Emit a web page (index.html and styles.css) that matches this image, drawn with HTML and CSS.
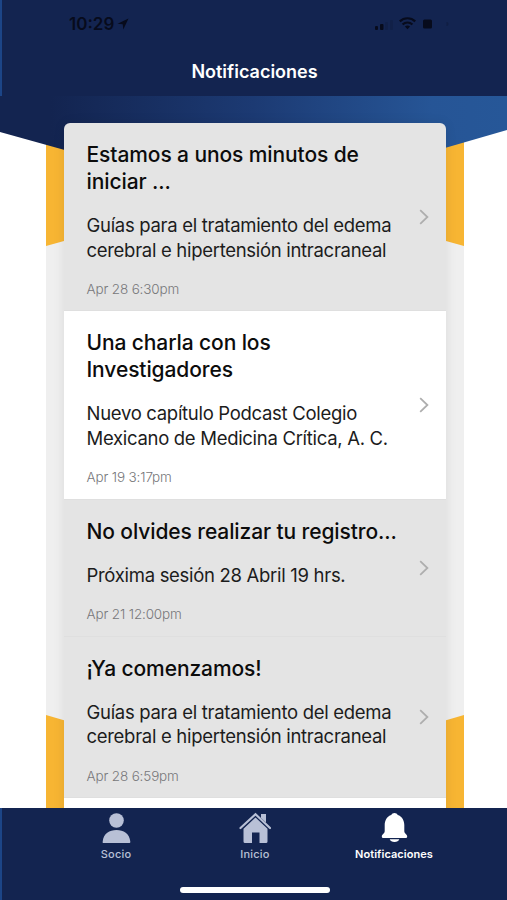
FILE: index.html
```html
<!DOCTYPE html>
<html lang="es">
<head>
<meta charset="UTF-8">
<meta name="viewport" content="width=device-width, initial-scale=1">
<title>Notificaciones</title>
<link rel="stylesheet" href="styles.css">
</head>
<body>
<div class="app">
  <header class="header">
    <div class="status">
      <span class="time">10:29</span>
      <svg class="location" width="12" height="12" viewBox="0 0 12 12"><path d="M11.5 .5L.5 5.7l5.2.6.6 5.2z"/></svg>
      <svg class="signals" width="78" height="16" viewBox="0 0 78 16">
        <rect x="1" y="10" width="3" height="4" rx="1"/>
        <rect x="6" y="8" width="3.5" height="6" rx="1"/>
        <rect x="11" y="6" width="3" height="8" rx="1" opacity=".15"/>
        <rect x="16" y="4" width="3" height="10" rx="1" opacity=".15"/>
        <g fill="none" stroke="#070b1c" stroke-width="2.2">
          <path d="M25.800 5.400a11 11 0 0 1 15.400 0"/>
          <path d="M28.600 8.500a7 7 0 0 1 9.800 0"/>
        </g>
        <path d="M33.500 13.300l-2.600-2.700a3.800 3.800 0 0 1 5.200 0z"/>
        <rect x="49" y="3.500" width="9" height="9" rx="1.500"/>
        <path d="M72.500 6v4a2 2 0 0 0 0-4z" opacity=".25"/>
      </svg>
    </div>
    <h1>Notificaciones</h1>
  </header>

  <main class="content">
    <svg class="backdrop" width="507" height="712" viewBox="0 0 507 712">
      <defs>
        <linearGradient id="blue" x1="0" x2="1" y1="0" y2="0">
          <stop offset=".1" stop-color="#132450"/>
          <stop offset=".5" stop-color="#1c3a73"/>
          <stop offset=".85" stop-color="#265596"/>
          <stop offset="1" stop-color="#265798"/>
        </linearGradient>
      </defs>
      <rect x="46" width="418" height="712" fill="#f7b533"/>
      <path d="M46 150L255 92L464 150V619L255 680L46 619z" fill="#efefef"/>
      <path d="M0 0H507V34L255 107L0 36z" fill="url(#blue)"/>
    </svg>
    <div class="list">
      <article class="item">
        <div class="text">
          <h2>Estamos a unos minutos de<br>iniciar ...</h2>
          <p>Guías para el tratamiento del edema<br>cerebral e hipertensión intracraneal</p>
          <time>Apr 28 6:30pm</time>
        </div>
        <svg class="chevron" width="10" height="16" viewBox="0 0 10 16"><path d="M1.2 1.2L8.4 8l-7.2 6.8"/></svg>
      </article>
      <article class="item unread">
        <div class="text">
          <h2>Una charla con los<br>Investigadores</h2>
          <p>Nuevo capítulo Podcast Colegio<br>Mexicano de Medicina Crítica, A. C.</p>
          <time>Apr 19 3:17pm</time>
        </div>
        <svg class="chevron" width="10" height="16" viewBox="0 0 10 16"><path d="M1.2 1.2L8.4 8l-7.2 6.8"/></svg>
      </article>
      <article class="item">
        <div class="text">
          <h2>No olvides realizar tu registro...</h2>
          <p>Próxima sesión 28 Abril 19 hrs.</p>
          <time>Apr 21 12:00pm</time>
        </div>
        <svg class="chevron" width="10" height="16" viewBox="0 0 10 16"><path d="M1.2 1.2L8.4 8l-7.2 6.8"/></svg>
      </article>
      <article class="item">
        <div class="text">
          <h2>¡Ya comenzamos!</h2>
          <p>Guías para el tratamiento del edema<br>cerebral e hipertensión intracraneal</p>
          <time>Apr 28 6:59pm</time>
        </div>
        <svg class="chevron" width="10" height="16" viewBox="0 0 10 16"><path d="M1.2 1.2L8.4 8l-7.2 6.8"/></svg>
      </article>
      <div class="next"></div>
    </div>
  </main>

  <footer class="footer">
    <nav class="tabs">
      <a class="tab">
        <svg width="32" height="32" viewBox="0 0 32 32"><circle cx="16.5" cy="8.5" r="7.3"/><path d="M3 31q-.5 0-.3-1.600C3.500 21.500 9.500 18 16.500 18s13 3.500 13.800 11.400q.2 1.600-.8 1.600z"/></svg>
        <span>Socio</span>
      </a>
      <a class="tab">
        <svg width="32" height="32" viewBox="0 0 32 32"><path d="M22 2h5v8.500l-5-4.600z"/><path d="M1.500 16L16.500 2.200L31 16" fill="none" stroke="#b8c0d6" stroke-width="2.200" stroke-linecap="round"/><path d="M16.500 5.600L28.500 16.700v12.800q0 1.500-1.500 1.500h-6.500V20.500h-7.500V31H6q-1.500 0-1.500-1.500V16.700z"/></svg>
        <span>Inicio</span>
      </a>
      <a class="tab active">
        <svg width="32" height="32" viewBox="0 0 32 32"><path d="M16.500 1c-1.400 0-2.500.7-3.200 1.900C9 4.200 6.700 8.200 6.700 13v6c0 2.600-2.900 3.500-2.900 5.400 0 1 .7 1.700 2 1.700h21.400c1.300 0 2-.7 2-1.700 0-1.900-2.900-2.800-2.900-5.400v-6c0-4.800-2.300-8.800-6.600-10.100C19 1.700 17.900 1 16.500 1z"/><path d="M11.700 27.300h9.600a5 3.700 0 0 1-9.600 0z"/></svg>
        <span>Notificaciones</span>
      </a>
    </nav>
    <div class="home-bar"></div>
  </footer>
</div>
</body>
</html>
```
FILE: styles.css
```css
* {
  box-sizing: border-box;
}

body {
  margin: 0;
  font-family: Inter, "Liberation Sans", sans-serif;
}

h1, h2, p {
  margin: 0;
}

.app {
  display: flex;
  flex-direction: column;
  width: 507px;
  height: 900px;
  overflow: hidden;
  background: #fff;
}

/* header */
.header {
  height: 96px;
  flex: none;
  background: #132450;
  border-left: 2px solid #1c4587;
}

.status {
  display: flex;
  align-items: center;
  height: 48px;
  padding: 0 55px 0 67px;
  fill: #070b1c;
}

.time {
  color: #070b1c;
  font-size: 17px;
  font-weight: 600;
}

.location {
  margin-left: 3px;
}

.signals {
  margin-left: auto;
}

h1 {
  color: #fff;
  font-size: 18px;
  font-weight: 600;
  line-height: 48px;
  text-align: center;
}

/* list */
.content {
  position: relative;
  height: 712px;
  flex: none;
  overflow: hidden;
  padding: 27px 61px 0 64px;
}

.backdrop {
  position: absolute;
  top: 0;
  left: 0;
}

.list {
  position: relative;
  border-radius: 6px 6px 0 0;
  box-shadow: 0 0 12px rgba(0, 0, 0, .09);
}

.item {
  display: flex;
  align-items: center;
  justify-content: space-between;
  padding: 18px 17px 13.4px 22.5px;
  background: #e4e4e4;
  border-bottom: 1px solid #dfdfdf;
}

.item:first-child {
  border-radius: 6px 6px 0 0;
}

.unread {
  background: #fff;
}

h2 {
  color: #0c0c0c;
  font-size: 21px;
  font-weight: 500;
  line-height: 27px;
  letter-spacing: -.1px;
  white-space: nowrap;
}

.text {
  width: 320px;
}

.text p {
  margin-top: 18px;
  color: #1c1c1c;
  font-size: 18.5px;
  line-height: 24.5px;
  letter-spacing: -.3px;
  white-space: nowrap;
}

.text time {
  display: block;
  margin-top: 19px;
  color: #77777a;
  font-size: 13.5px;
  font-weight: 300;
  line-height: 16px;
  letter-spacing: -.15px;
}

.chevron {
  flex: none;
  margin-bottom: 4px;
  fill: none;
  stroke: #aeaeae;
  stroke-width: 1.8;
}

.next {
  height: 30px;
  background: #fff;
}

/* bottom tabs */
.footer {
  height: 92px;
  flex: none;
  background: #132450;
  border-left: 2px solid #1c4587;
}

.tabs {
  display: flex;
  justify-content: center;
  padding: 4px 0 0 1px;
}

.tab {
  display: flex;
  flex-direction: column;
  align-items: center;
  width: 139px;
  color: #b8c0d6;
  fill: #b8c0d6;
  font-size: 11px;
  font-weight: 500;
  line-height: 14px;
}

.tab span {
  margin-top: 3px;
  letter-spacing: .2px;
}

.active {
  color: #fff;
  fill: #fff;
  font-weight: 600;
}

.tab.active span {
  letter-spacing: .05px;
}

.home-bar {
  width: 150px;
  height: 6px;
  margin: 26px auto 0;
  border-radius: 3px;
  background: #fff;
}
```
